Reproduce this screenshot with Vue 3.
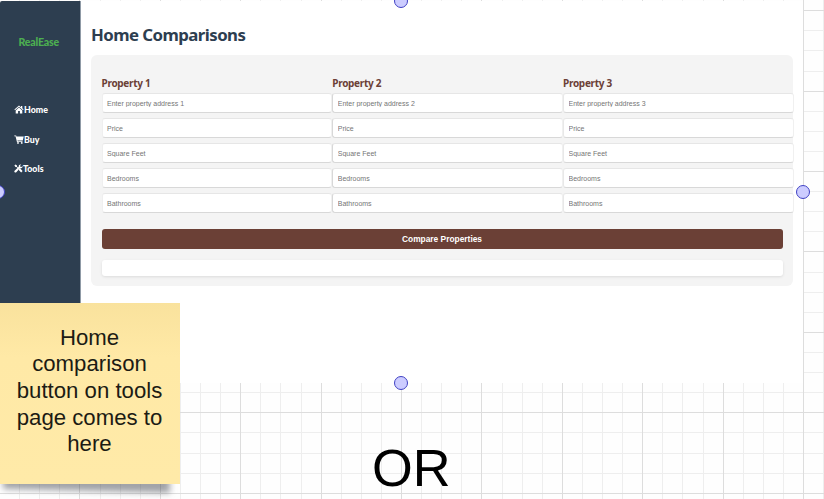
<script setup>
const columns = [1, 2, 3]
const fields = ['Price', 'Square Feet', 'Bedrooms', 'Bathrooms']

const vertical = []
for (let n = -19; n <= 21; n++) {
  vertical.push({ at: Math.floor(401.5 + 20.1 * n), major: n % 4 === 0 })
}
const horizontal = []
for (let n = -3; n <= 21; n++) {
  horizontal.push({ at: Math.floor(71.09 + 20.101 * n), major: (n + 3) % 4 === 0 })
}
</script>

<template>
  <div class="board">
    <svg class="grid" width="824" height="499" shape-rendering="crispEdges">
      <g v-for="major in [false, true]" :key="major" :fill="major ? '#dddddd' : '#eeeeee'">
        <template v-for="l in vertical" :key="'v' + l.at">
          <rect v-if="l.major === major" :x="l.at" y="0" width="1" height="499" />
        </template>
        <template v-for="l in horizontal" :key="'h' + l.at">
          <rect v-if="l.major === major" x="0" :y="l.at" width="824" height="1" />
        </template>
      </g>
    </svg>

    <div class="screen">
      <nav class="sidebar">
        <div class="logo">RealEase</div>
        <a class="link">
          <svg class="icon" width="10" height="9" viewBox="0 0 20 18">
            <path d="M10 1 L0.8 9 L2 10.4 L10 3.6 L18 10.4 L19.2 9 L16.6 6.7 V2 H14 V4.5 Z" />
            <path d="M10 5.2 L3.4 10.8 V17 H8.2 V12 H11.8 V17 H16.6 V10.8 Z" />
          </svg><span class="home">Home</span>
        </a>
        <a class="link">
          <svg class="icon" width="10" height="9" viewBox="0 0 20 18">
            <path d="M0.5 0.8 H4.3 L4.8 2.8 H19.5 L17.6 11 H7 L7.4 12.6 H17 V14 H5.9 L3.1 2.4 H0.5 Z" />
            <circle cx="8" cy="15.8" r="1.9" />
            <circle cx="15.5" cy="15.8" r="1.9" />
          </svg><span class="buy">Buy</span>
        </a>
        <a class="link">
          <svg class="icon tools" width="9" height="9" viewBox="0 0 18 18">
            <path d="M0.8 2.8 L2.8 0.8 L6 3 V5 L9.6 8.4 L12 8.6 L17.2 14 L14.4 16.8 L9 11.6 L8.8 9.4 L5 6 H3 Z" />
            <path d="M17 3.8 L14.2 6.3 L11.8 4 L14.4 1.2 C11.4 0.2 8.8 2.6 9.5 5.6 L1.2 13.4 C-0.6 15.6 2.3 18.4 4.6 16.6 L8.2 12.6 L10 8.6 C14 10 18.2 7.4 17 3.8 Z" />
          </svg><span class="tool">Tools</span>
        </a>
      </nav>

      <main class="content">
        <h1>Home Comparisons</h1>
        <section class="panel">
          <div class="columns">
            <div v-for="c in columns" :key="c" class="column">
              <h2>Property {{ c }}</h2>
              <input type="text" :placeholder="'Enter property address ' + c" />
              <input v-for="f in fields" :key="f" type="text" :placeholder="f" />
            </div>
          </div>
          <button class="compare">Compare Properties</button>
          <div class="result"></div>
        </section>
      </main>
    </div>

    <i class="handle top"></i>
    <i class="handle left"></i>
    <i class="handle right"></i>
    <i class="handle bottom"></i>

    <div class="note-shadow"></div>
    <div class="note">Home<br />comparison<br />button on tools<br />page comes to<br />here</div>
    <div class="or">OR</div>
  </div>
</template>

<style>
body {
  margin: 0;
  overflow: hidden;
}
</style>

<style scoped>
.board {
  position: relative;
  width: 824px;
  height: 499px;
  overflow: hidden;
  background: #fefefe;
  font-family: "Liberation Sans", Arial, sans-serif;
}
.grid {
  display: block;
}
.screen {
  position: absolute;
  left: 0;
  top: 1px;
  width: 803px;
  height: 382px;
  display: flex;
  background: #fff;
}
.sidebar {
  box-sizing: border-box;
  width: 81px;
  flex: none;
  padding: 34px 0 0 14px;
  background: #2d3e50;
  border-right: 1px solid #8f9aa6;
  border-top-left-radius: 2px;
  font-family: Lato, sans-serif;
}
.logo {
  height: 14px;
  margin: 0 0 54px 4.5px;
  font-size: 10.6px;
  line-height: 14px;
  font-weight: 900;
  letter-spacing: -0.2px;
  color: #4caf50;
}
.link {
  display: flex;
  align-items: center;
  height: 14px;
  margin-bottom: 15.7px;
  font-size: 8.8px;
  line-height: 14px;
  font-weight: 900;
  color: #fff;
}
.icon {
  flex: none;
  fill: #fff;
  margin-top: -1px;
}
.content {
  flex: 1;
  min-width: 0;
  padding: 22px 10.5px 0 10px;
}
h1 {
  margin: 0 0 8px;
  height: 24px;
  font: 700 16.8px/24px "Noto Sans", sans-serif;
  letter-spacing: -0.55px;
  white-space: nowrap;
  color: #2d3e50;
}
.panel {
  box-sizing: border-box;
  height: 231px;
  padding: 20.5px 10px 0 10.5px;
  border-radius: 6px;
  background: #f4f4f4;
}
.columns {
  display: flex;
  width: 692.3px;
}
.column {
  flex: 1;
  min-width: 0;
}
h2 {
  margin: 0 0 3.5px;
  height: 14px;
  font: 700 10px/14px "Noto Sans", sans-serif;
  letter-spacing: -0.3px;
  color: #6b4036;
}
input {
  display: block;
  box-sizing: border-box;
  width: 100%;
  height: 20px;
  margin: 0 0 5px;
  padding: 0 4.5px;
  border: 1px solid #d8d8d8;
  border-top-color: #e6e6e6;
  border-right-color: #f0f0f0;
  border-radius: 3px;
  outline: none;
  background: #fff;
  font: 7px "Liberation Sans", Arial, sans-serif;
}
.column:first-child input {
  border-left-color: #efefef;
}
.column:last-child input {
  border-left-color: #e8e8e8;
}
input::placeholder {
  color: #757575;
  opacity: 1;
}
.compare {
  display: block;
  width: 100%;
  height: 20.5px;
  margin: 10.5px 0 10.5px;
  padding: 0;
  border: 0;
  border-radius: 3px;
  background: #6b4036;
  color: #fff;
  font: 700 8.4px/21px "Liberation Sans", Arial, sans-serif;
}
.result {
  height: 16px;
  border-radius: 3px;
  background: #fff;
  box-shadow: 0 1px 3px rgba(0, 0, 0, 0.1);
}
.handle {
  position: absolute;
  box-sizing: border-box;
  width: 14px;
  height: 14px;
  border: 1.3px solid #4142c4;
  border-radius: 50%;
  background: #ccccff;
}
.top { left: 394px; top: -6px; }
.left { left: -9px; top: 185px; }
.right { left: 796px; top: 185px; }
.bottom { left: 394px; top: 376px; }
.note {
  position: absolute;
  left: 0;
  top: 303px;
  box-sizing: border-box;
  width: 180px;
  height: 181px;
  padding: 21.5px 1px 0 0;
  background: linear-gradient(#f9e29d, #ffe9a6 30%, #ffeaa8);
  color: #1c1b14;
  font-size: 22.2px;
  line-height: 26.7px;
  text-align: center;
  white-space: nowrap;
}
.note-shadow {
  position: absolute;
  left: 3px;
  top: 466px;
  width: 167px;
  height: 25px;
  background: rgba(70, 74, 84, 0.5);
  clip-path: polygon(0 0, 100% 0, 100% 100%, 0 76%);
  filter: blur(3px);
  clip-path: none;
  transform: skewY(1.4deg);
}
.or {
  position: absolute;
  left: 372px;
  top: 438px;
  font-size: 52.4px;
  line-height: 60px;
  color: #000;
}
</style>
